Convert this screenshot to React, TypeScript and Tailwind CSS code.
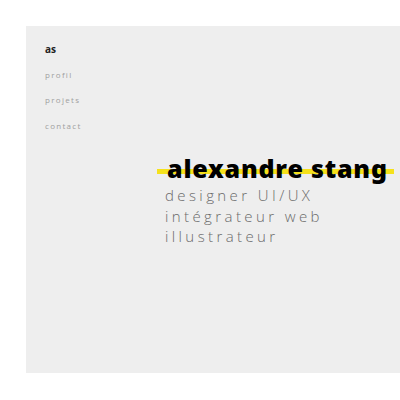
export default function App() {
  return (
    <div className="w-[400px] h-[400px] bg-white pt-[26px] pl-[26px] overflow-hidden">
      <div className="h-[347px] bg-[#eeeeee] pl-[19px] pt-[16px] font-['Open_Sans',sans-serif]">
        {/* Navigation */}
        <nav className="flex flex-col">
          <span className="text-[10px] font-bold leading-[14px] text-[#222]">as</span>
          <a className="mt-[13px] text-[8px] leading-[12px] tracking-[1.3px] text-[#a0a0a0]">profil</a>
          <a className="mt-[13px] text-[8px] leading-[12px] tracking-[1.3px] text-[#a0a0a0]">projets</a>
          <a className="mt-[14px] text-[8px] leading-[12px] tracking-[1.3px] text-[#a0a0a0]">contact</a>
        </nav>

        {/* Title */}
        <div className="ml-[112px] mt-[22px]">
          <h1 className="relative inline-block pl-[10px] pr-[6px] font-['Noto_Sans',sans-serif] text-[25px] font-black leading-[28px] tracking-[0.8px] text-black">
            <span className="absolute left-0 right-0 top-[15px] h-[5px] bg-[#f5e11c]" />
            <span className="relative">alexandre stang</span>
          </h1>
          <div className="pl-[8px] mt-[1px] text-[15px] font-light leading-[20.5px] tracking-[3.4px] text-[#6a6a6a]">
            <p>designer UI/UX</p>
            <p>intégrateur web</p>
            <p>illustrateur</p>
          </div>
        </div>
      </div>
    </div>
  );
}
